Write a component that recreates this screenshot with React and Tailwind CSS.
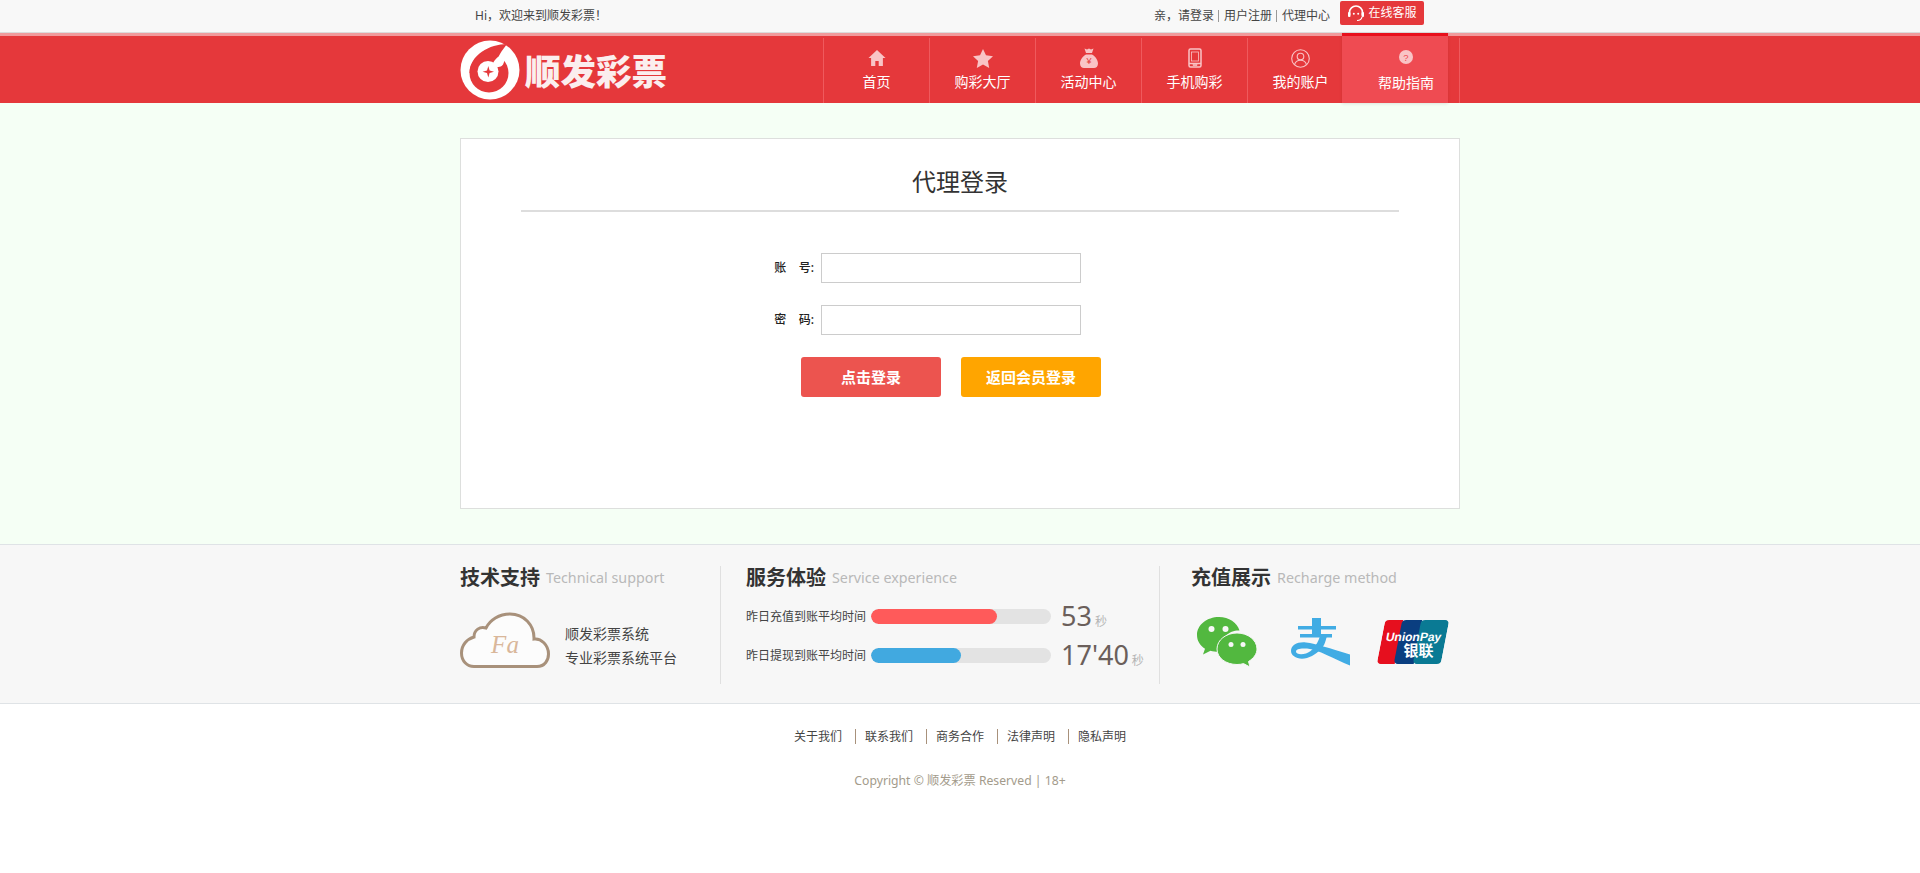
const FONT = 'font-["Noto_Sans","Noto_Sans_CJK_SC",sans-serif]';

const HomeIcon = () => (
  <svg width="18" height="18" viewBox="0 0 18 18" fill="#f9c4c6">
    <path d="M9 1 0.5 9h2.6v8h4.2v-5h3.4v5h4.2V9h2.6z" />
  </svg>
);
const StarIcon = () => (
  <svg width="20" height="19" viewBox="0 0 20 19" fill="#f9c4c6">
    <path d="M10 0l3 6.300 7 .9-5.100 4.800 1.300 6.900L10 15.600 3.800 18.900 5.100 12 0 7.200l7-.9z" />
  </svg>
);
const BagIcon = () => (
  <svg width="20" height="20" viewBox="0 0 20 20">
    <path fill="#f9c4c6" d="M5.500 0.500 8 1.500 10 .5l2 1 2.500-1-1.500 4.500H7zM7 6.500h6c3.500 2 6 5.500 6 9 0 3-2 4.500-4 4.500H5c-2 0-4-1.500-4-4.500 0-3.500 2.500-7 6-9z" />
    <text x="10" y="16" textAnchor="middle" fontSize="9" fill="#e5383b" fontFamily="Liberation Sans, sans-serif">¥</text>
  </svg>
);
const PhoneIcon = () => (
  <svg width="14" height="20" viewBox="0 0 14 20" fill="none" stroke="#f9c4c6" strokeWidth="1.500">
    <rect x="1" y="1" width="12" height="18" rx="1.500" />
    <path d="M1 15.500h12" />
    <rect x="5" y="16.500" width="4" height="1.200" fill="#f9c4c6" strokeWidth="0.500" />
    <rect x="3.500" y="4" width="7" height="9" strokeWidth="0.800" />
  </svg>
);
const UserIcon = () => (
  <svg width="19" height="19" viewBox="0 0 19 19" fill="none" stroke="#f9c4c6" strokeWidth="1.100">
    <circle cx="9.500" cy="9.500" r="8.800" />
    <circle cx="9.500" cy="7.500" r="3.300" />
    <path d="M3.500 15.800c.8-3 3-4.500 6-4.500s5.200 1.500 6 4.500" />
  </svg>
);
const HelpIcon = () => (
  <svg width="14" height="14" viewBox="0 0 14 14">
    <circle cx="7" cy="7" r="7" fill="#f9c4c6" />
    <text x="7" y="10.500" textAnchor="middle" fontSize="9.500" fill="#ef4b52" fontFamily="Liberation Sans, sans-serif">?</text>
  </svg>
);

const Headset = () => (
  <svg width="18" height="18" viewBox="0 0 18 18" fill="none" stroke="#fff" strokeWidth="1.600">
    <path d="M2.500 11V8.500a6.500 6.500 0 0 1 13 0V11" />
    <rect x="1" y="8" width="2.500" height="5" rx="1" fill="#fff" stroke="none" />
    <rect x="14.500" y="8" width="2.500" height="5" rx="1" fill="#fff" stroke="none" />
    <path d="M15 13c-.5 2.500-2.500 3.500-5 3.500" strokeWidth="1.200" />
    <circle cx="6.800" cy="9.800" r="1" fill="#fff" stroke="none" />
    <circle cx="11.200" cy="9.800" r="1" fill="#fff" stroke="none" />
  </svg>
);

const Logo = () => (
  <svg width="60" height="60" viewBox="0 0 60 60">
    <circle cx="30" cy="30" r="29.500" fill="#fff" />
    <path fill="#e5383b" d="M47 4C30 4 9.500 15 9.500 33L30 33 40 14C42 10 45 7 47 4z" />
    <circle cx="29" cy="33" r="19.500" fill="#e5383b" />
    <circle cx="28" cy="31.500" r="10.500" fill="#fff" />
    <path fill="#fff" d="M33 23C37 16 44 12 51 13 47 15 45 18 44 22 43 26 41 27 37 27z" />
    <path fill="#e5383b" d="M28.300 26l1.300 4.400 4.400 1.300-4.400 1.300-1.300 4.400-1.300-4.400-4.400-1.300 4.400-1.300z" />
  </svg>
);

const Cloud = () => (
  <svg width="90" height="56" viewBox="0 0 90 56">
    <path
      fill="#fff" fillOpacity="0.6" stroke="#a8917b" strokeWidth="3"
      d="M14 54.500H77C85 54.500 88.500 48 88.500 42 88.500 33 81 26 74 27 74.500 13 64 2 50 2 39 2 30 8 26 16 20 14 14 18 14 25 7 27 1.500 33 1.500 41 1.500 49 7 54.500 14 54.500z"
    />
    <text x="45" y="41" textAnchor="middle" fontSize="25" fontStyle="italic" fill="#d9b79a" fontFamily="Liberation Serif, serif">Fa</text>
  </svg>
);

const WeChat = () => (
  <svg width="60" height="50" viewBox="0 0 60 50">
    <path fill="#52b83f" d="M22 0C10 0 0 7.800 0 18c0 5.800 3 10.500 8 13.800L6 37.500l7.500-3.700c2.500.7 5 1 8 1 1 0 1.500 0 2.500-.1C23 20 33 13 42.500 13.500 40 5.500 32 0 22 0z" />
    <circle cx="14.500" cy="12" r="3" fill="#f7f7f7" />
    <circle cx="28.500" cy="12" r="3" fill="#f7f7f7" />
    <path fill="#52b83f" stroke="#f7f7f7" strokeWidth="1" d="M40 16c-11 0-20 7-20 16s9 15.500 20 15.500c2.500 0 4.500-.3 6.500-.9L53 50l-1.500-5.500C56.500 41.500 60 37 60 32c0-9-9-16-20-16z" />
    <circle cx="34" cy="27.500" r="2.500" fill="#f7f7f7" />
    <circle cx="46" cy="27.500" r="2.500" fill="#f7f7f7" />
  </svg>
);

const Alipay = () => (
  <svg width="60" height="48" viewBox="0 0 60 48" fill="#41ace4">
    <rect x="22" y="0" width="9" height="17" />
    <rect x="8" y="8" width="38" height="3.500" />
    <rect x="10" y="16" width="32" height="3.500" />
    <path d="M30 18l7 0c-1 3-1.500 6-3 9C30 33 24 38 17 40 8 42.500 1 38 1 33c0-6 7-9.500 15-8.500 10 1 24 6 44 12v11C44 41 28 31.500 17 30.500 10 30 6 31 6 33.500c0 2.800 5 3.500 10 2 6-2 11-8 14-17.500z" />
  </svg>
);

const UnionPay = () => (
  <div className="relative w-[64px] h-[44px] overflow-hidden rounded-[4px] -skew-x-[11deg] flex">
    <div className="w-[18px] bg-[#e60f1e]" />
    <div className="w-[20px] bg-[#0a3e80] rounded-l-[4px] -ml-[1px]" />
    <div className="flex-1 bg-[#0a7a94] rounded-l-[4px] -ml-[1px]" />
    <div className="absolute left-[4px] top-[10px] text-[12px] leading-[14px] font-bold text-white whitespace-nowrap font-['Liberation_Sans',sans-serif]">UnionPay</div>
    <div className="absolute left-[24px] top-[21px] text-[15px] leading-[18px] font-bold text-white whitespace-nowrap font-['Noto_Sans_CJK_SC',sans-serif] skew-x-[11deg]">银联</div>
  </div>
);

const NAV = [
  { label: '首页', icon: <HomeIcon /> },
  { label: '购彩大厅', icon: <StarIcon /> },
  { label: '活动中心', icon: <BagIcon /> },
  { label: '手机购彩', icon: <PhoneIcon /> },
  { label: '我的账户', icon: <UserIcon /> },
];

const SectionTitle = ({ title, sub }) => (
  <div className="h-[20px] flex items-center">
    <span className="text-[20px] leading-[20px] font-bold text-[#333] whitespace-nowrap">{title}</span>
    <span className="ml-[6px] text-[14.300px] leading-[20px] text-[#b9b9b9] whitespace-nowrap">{sub}</span>
  </div>
);

const SpeedRow = ({ label, barWidth, barColor, value }) => (
  <div className="flex items-center h-[15px]">
    <span className="w-[125px] text-[12px] text-[#444] whitespace-nowrap">{label}</span>
    <div className="w-[180px] h-[15px] rounded-full bg-[#e3e3e3] overflow-hidden">
      <div className={`h-full rounded-full ${barColor}`} style={{ width: barWidth }} />
    </div>
    <span className="ml-[10px] -mt-[3px] text-[27px] leading-[15px] text-[#6b5f5b] whitespace-nowrap">{value}</span>
    <span className="ml-[3px] mt-[9px] text-[12px] leading-[15px] text-[#b5b5b5]">秒</span>
  </div>
);

const Sep = () => <span className="w-px h-[12px] mx-[4.500px] bg-[#999]" />;

export default function App() {
  return (
    <div className={`${FONT} min-h-[873px] bg-white`}>
      {/* top bar */}
      <div className="h-[33px] bg-[#f8f8f8] border-b border-[#dcdcdc]">
        <div className="w-[1000px] mx-auto flex items-center justify-between h-[32px] pl-[15px] pr-[36px] text-[12px] text-[#444]">
          <span>Hi，欢迎来到顺发彩票！</span>
          <div className="flex items-center">
            <span>亲，请登录</span>
            <Sep />
            <span>用户注册</span>
            <Sep />
            <span>代理中心</span>
            <a className="ml-[10px] -mt-[6px] w-[84px] h-[24px] rounded-[2px] bg-[#e5383b] text-white flex items-center justify-center gap-[3px]">
              <Headset />
              在线客服
            </a>
          </div>
        </div>
      </div>

      {/* header */}
      <div className="h-[70px] bg-[#e5383b] border-t-[3px] border-[#f19a9c]">
        <div className="w-[1000px] mx-auto h-full flex justify-between relative">
          <div className="flex items-center h-full">
            <Logo />
            <span className="ml-[5px] text-[35.500px] leading-[40px] font-black text-[#fbeeee] whitespace-nowrap font-['Noto_Sans_CJK_SC',sans-serif]">顺发彩票</span>
          </div>
          <nav className="flex h-full pt-[2px]">
            {NAV.map((item) => (
              <div key={item.label} className="w-[106px] h-[65px] border-l border-[#ef5a5d] flex flex-col items-center text-white text-[14px]">
                <div className="h-[22px] mt-[9px] flex items-center justify-center">{item.icon}</div>
                <span className="mt-[5px] leading-[16px]">{item.label}</span>
              </div>
            ))}
            <div className="relative w-[106px] h-[70px] -mt-[5px] -ml-[11px] pl-[22px] bg-[#ef4b52] border-t-[3px] border-[#e8101c] flex flex-col items-center text-white text-[14px] shadow-[0_1px_3px_rgba(0,0,0,0.1)]">
              <div className="h-[22px] mt-[10px] flex items-center justify-center"><HelpIcon /></div>
              <span className="mt-[7px] leading-[16px] whitespace-nowrap">帮助指南</span>
            </div>
            <div className="w-[12px] h-[65px] border-r border-[#ef5a5d]" />
          </nav>
        </div>
      </div>

      {/* login */}
      <main className="h-[441px] bg-[#f5fff5] pt-[35px]">
        <div className="w-[1000px] h-[371px] mx-auto bg-white border border-[#dddfdd]">
          <div className="mx-[60px] h-[73px] border-b-2 border-[#dddddd] flex items-center justify-center pt-[14px] text-[24px] text-[#333]">
            代理登录
          </div>
          <form className="mt-[41px] flex flex-col items-start pl-[313px] text-[12px] text-[#222]">
            <label className="flex items-center h-[30px]">
              <span className="w-[47px] pr-[7px] text-right font-medium whitespace-pre">账    号:</span>
              <input className="w-[260px] h-[30px] bg-white border border-[#cccccc] outline-none" />
            </label>
            <label className="flex items-center h-[30px] mt-[22px]">
              <span className="w-[47px] pr-[7px] text-right font-medium whitespace-pre">密    码:</span>
              <input type="password" className="w-[260px] h-[30px] bg-white border border-[#cccccc] outline-none" />
            </label>
            <div className="flex gap-[20px] mt-[22px] ml-[27px]">
              <button type="button" className="w-[140px] h-[40px] rounded-[3px] bg-[#ec544f] text-white text-[15px] font-bold">点击登录</button>
              <button type="button" className="w-[140px] h-[40px] rounded-[3px] bg-[#ffa500] text-white text-[15px] font-bold">返回会员登录</button>
            </div>
          </form>
        </div>
      </main>

      {/* info band */}
      <section className="h-[160px] bg-[#f7f7f7] border-t border-b border-[#dfe3e6]">
        <div className="w-[1000px] mx-auto flex pt-[21px] h-full">
          <div className="w-[261px] h-[118px] border-r border-[#e0e0e0]">
            <div className="pt-[2px]">
              <SectionTitle title="技术支持" sub="Technical support" />
            </div>
            <div className="flex mt-[24px]">
              <Cloud />
              <div className="ml-[15px] mt-[10px] text-[14px] leading-[24px] text-[#444] whitespace-nowrap">
                <p>顺发彩票系统</p>
                <p>专业彩票系统平台</p>
              </div>
            </div>
          </div>
          <div className="w-[439px] h-[118px] pl-[25px] pt-[2px] border-r border-[#e0e0e0]">
            <SectionTitle title="服务体验" sub="Service experience" />
            <div className="mt-[21px] flex flex-col gap-[24px]">
              <SpeedRow label="昨日充值到账平均时间" barWidth="70%" barColor="bg-[#ff5a5a]" value="53" />
              <SpeedRow label="昨日提现到账平均时间" barWidth="50%" barColor="bg-[#41a9e0]" value="17'40" />
            </div>
          </div>
          <div className="pl-[31px] pt-[2px]">
            <SectionTitle title="充值展示" sub="Recharge method" />
            <div className="flex items-center mt-[29px] ml-[6px]">
              <WeChat />
              <div className="ml-[33px]"><Alipay /></div>
              <div className="ml-[31px]"><UnionPay /></div>
            </div>
          </div>
        </div>
      </section>

      {/* footer */}
      <footer className="pt-[24px] text-[12px]">
        <div className="flex justify-center items-center h-[16px] text-[#444]">
          {['关于我们', '联系我们', '商务合作', '法律声明', '隐私声明'].map((t, i) => (
            <span key={t} className={i ? 'ml-[13px] pl-[9px] border-l border-[#a8917b] leading-[15px]' : 'leading-[15px]'}>{t}</span>
          ))}
        </div>
        <p className="mt-[29px] text-center text-[12.200px] leading-[16px] text-[#a39b8b]">Copyright © 顺发彩票 Reserved | 18+</p>
      </footer>
    </div>
  );
}
